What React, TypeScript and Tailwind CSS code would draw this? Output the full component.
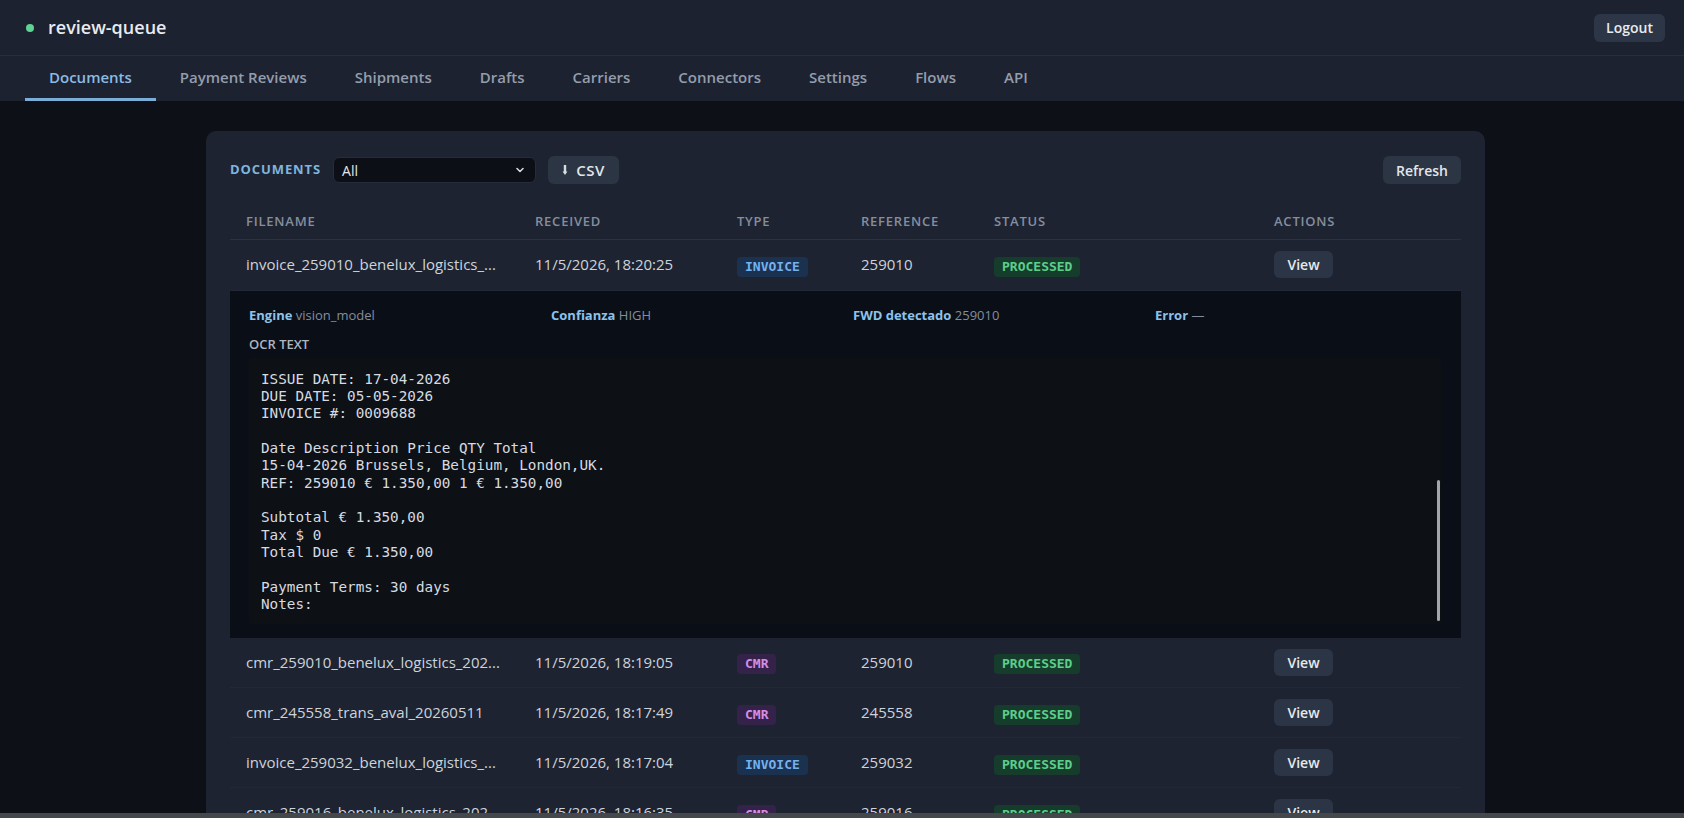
import React from "react";

type Row = {
  file: string;
  received: string;
  type: "INVOICE" | "CMR";
  ref: string;
  status: string;
  expanded?: boolean;
};

const rows: Row[] = [
  { file: "invoice_259010_benelux_logistics_...", received: "11/5/2026, 18:20:25", type: "INVOICE", ref: "259010", status: "PROCESSED", expanded: true },
  { file: "cmr_259010_benelux_logistics_202...", received: "11/5/2026, 18:19:05", type: "CMR", ref: "259010", status: "PROCESSED" },
  { file: "cmr_245558_trans_aval_20260511", received: "11/5/2026, 18:17:49", type: "CMR", ref: "245558", status: "PROCESSED" },
  { file: "invoice_259032_benelux_logistics_...", received: "11/5/2026, 18:17:04", type: "INVOICE", ref: "259032", status: "PROCESSED" },
  { file: "cmr_259016_benelux_logistics_202...", received: "11/5/2026, 18:16:35", type: "CMR", ref: "259016", status: "PROCESSED" },
];

const tabs = ["Documents", "Payment Reviews", "Shipments", "Drafts", "Carriers", "Connectors", "Settings", "Flows", "API"];

const ocr = `ISSUE DATE: 17-04-2026
DUE DATE: 05-05-2026
INVOICE #: 0009688

Date Description Price QTY Total
15-04-2026 Brussels, Belgium, London,UK.
REF: 259010 € 1.350,00 1 € 1.350,00

Subtotal € 1.350,00
Tax $ 0
Total Due € 1.350,00

Payment Terms: 30 days
Notes:`;

function TypeBadge({ type }: { type: Row["type"] }) {
  if (type === "INVOICE") {
    return (
      <span className="inline-block rounded-[4px] bg-[#1a3150] px-2 py-[2px] font-['DejaVu_Sans_Mono',monospace] text-[13px] font-bold leading-[16px] text-[#74b2ee]">
        INVOICE
      </span>
    );
  }
  return (
    <span className="inline-block rounded-[4px] bg-[#35224a] px-2 py-[2px] font-['DejaVu_Sans_Mono',monospace] text-[13px] font-bold leading-[16px] text-[#d38ee6]">
      CMR
    </span>
  );
}

function StatusBadge({ status }: { status: string }) {
  return (
    <span className="inline-block rounded-[4px] bg-[#163c2b] px-2 py-[2px] font-['DejaVu_Sans_Mono',monospace] text-[13px] font-bold leading-[16px] text-[#5ccf8b]">
      {status}
    </span>
  );
}

function ViewButton() {
  return (
    <button className="h-[27px] w-[59px] rounded-md bg-[#2c3545] text-[14px] font-semibold text-[#e6e9ee]">
      View
    </button>
  );
}

function Expanded() {
  return (
    <tr>
      <td colSpan={6} className="p-0">
        <div className="bg-[#0a0e17] pl-[19px] pr-[20px] pt-[14px] pb-[14px]">
          <div className="grid grid-cols-4 gap-x-4 text-[13px] leading-[20px]">
            <div>
              <span className="font-bold text-[#8cc3ec]">Engine</span>{" "}
              <span className="text-[#848d9c]">vision_model</span>
            </div>
            <div>
              <span className="font-bold text-[#8cc3ec]">Confianza</span>{" "}
              <span className="text-[#848d9c]">HIGH</span>
            </div>
            <div>
              <span className="font-bold text-[#8cc3ec]">FWD detectado</span>{" "}
              <span className="text-[#848d9c]">259010</span>
            </div>
            <div>
              <span className="font-bold text-[#8cc3ec]">Error</span>{" "}
              <span className="text-[#848d9c]">—</span>
            </div>
          </div>
          <div className="mt-[9px] text-[13px] font-semibold leading-[20px] text-[#aeb5c0]">OCR TEXT</div>
          <div className="relative mt-[4px] h-[266px] overflow-hidden rounded-[2px] bg-[#0d1116]">
            <pre className="pl-3 pt-[13px] font-['DejaVu_Sans_Mono',monospace] text-[14.3px] leading-[17.35px] text-[#d6dbe1]">
              {ocr}
            </pre>
            <div className="absolute right-[1px] top-[122px] h-[141px] w-[3px] rounded-full bg-[#a3a7ac]" />
          </div>
        </div>
      </td>
    </tr>
  );
}

export default function App() {
  return (
    <div className="min-h-screen bg-[#0d1016] font-['Open_Sans',sans-serif]">
      <header className="bg-[#1d2231]">
        <div className="flex h-[56px] items-center justify-between border-b border-[#282e3e] pl-[26px] pr-[19px]">
          <div className="flex items-center gap-[14px]">
            <span className="h-2 w-2 rounded-full bg-[#5fd394]" />
            <span className="text-[18px] font-semibold text-[#e8ebef]">review-queue</span>
          </div>
          <button className="h-[28px] rounded-md bg-[#2d3646] px-3 text-[14px] font-semibold text-[#e8ebef]">
            Logout
          </button>
        </div>
        <nav className="flex h-[45px] pl-[25px]">
          {tabs.map((t, i) => (
            <div
              key={t}
              className={
                i === 0
                  ? "flex h-full items-center border-b-[3px] border-[#79aed8] px-6 text-[15px] font-semibold text-[#8bbbe3]"
                  : "flex h-full items-center border-b-[3px] border-transparent px-6 text-[15px] font-semibold text-[#949dab]"
              }
            >
              {t}
            </div>
          ))}
        </nav>
      </header>

      <main className="pt-[30px]">
        <div className="ml-[206px] w-[1279px] rounded-[10px] bg-[#1e2332] px-6 pt-[25px] pb-6">
          <div className="flex h-[28px] items-center">
            <span className="text-[13px] font-bold tracking-[0.07em] text-[#7fb5dc]">DOCUMENTS</span>
            <div className="ml-3 flex h-[26px] w-[203px] items-center justify-between rounded-md border border-[#262c3a] bg-[#0c1016] pl-2 pr-[10px] text-[14px] text-[#e3e6ea]">
              <span>All</span>
              <svg width="10" height="10" viewBox="0 0 10 10" fill="none">
                <path d="M2 3.5 L5 6.5 L8 3.5" stroke="#d5d9de" strokeWidth="1.6" strokeLinecap="round" strokeLinejoin="round" />
              </svg>
            </div>
            <button className="ml-3 flex h-[28px] w-[71px] items-center justify-center gap-[8px] rounded-md bg-[#2b3544] text-[15px] font-semibold tracking-[0.04em] text-[#e3e6ea]">
              <svg width="6" height="12" viewBox="0 0 6 12" fill="none">
                <path d="M3 1 V9" stroke="#d8dce1" strokeWidth="2.4" />
                <path d="M0.6 7.5 L3 11 L5.4 7.5 Z" fill="#d8dce1" />
              </svg>
              CSV
            </button>
            <button className="ml-auto h-[28px] w-[78px] rounded-md bg-[#2b3544] text-[14px] font-semibold text-[#e3e6ea]">
              Refresh
            </button>
          </div>

          <table className="mt-[20px] w-full table-fixed border-collapse">
            <colgroup>
              <col className="w-[289px]" />
              <col className="w-[202px]" />
              <col className="w-[124px]" />
              <col className="w-[133px]" />
              <col className="w-[280px]" />
              <col className="w-[203px]" />
            </colgroup>
            <thead>
              <tr className="border-b border-[#2b3142]">
                {["Filename", "Received", "Type", "Reference", "Status", "Actions"].map((h) => (
                  <th
                    key={h}
                    className="h-[35px] px-4 text-left text-[13px] font-semibold uppercase tracking-[0.06em] text-[#858e9e]"
                  >
                    {h}
                  </th>
                ))}
              </tr>
            </thead>
            <tbody>
              {rows.map((r, i) => (
                <React.Fragment key={r.file + r.received}>
                  <tr className="border-b border-[#232838]">
                    <td className={i === 0 ? "h-[51px] px-4 text-[15px] text-[#cdd3db]" : "h-[50px] px-4 text-[15px] text-[#cdd3db]"}>
                      <div className="truncate">{r.file}</div>
                    </td>
                    <td className="px-4 text-[15px] text-[#cdd3db]">{r.received}</td>
                    <td className="px-4">
                      <TypeBadge type={r.type} />
                    </td>
                    <td className="px-4 text-[15px] text-[#cdd3db]">{r.ref}</td>
                    <td className="px-4">
                      <StatusBadge status={r.status} />
                    </td>
                    <td className="px-4">
                      <ViewButton />
                    </td>
                  </tr>
                  {r.expanded && <Expanded />}
                </React.Fragment>
              ))}
            </tbody>
          </table>
        </div>
      </main>

      <div className="fixed bottom-0 left-0 right-0 h-[5px] bg-[#44474b]" />
    </div>
  );
}
